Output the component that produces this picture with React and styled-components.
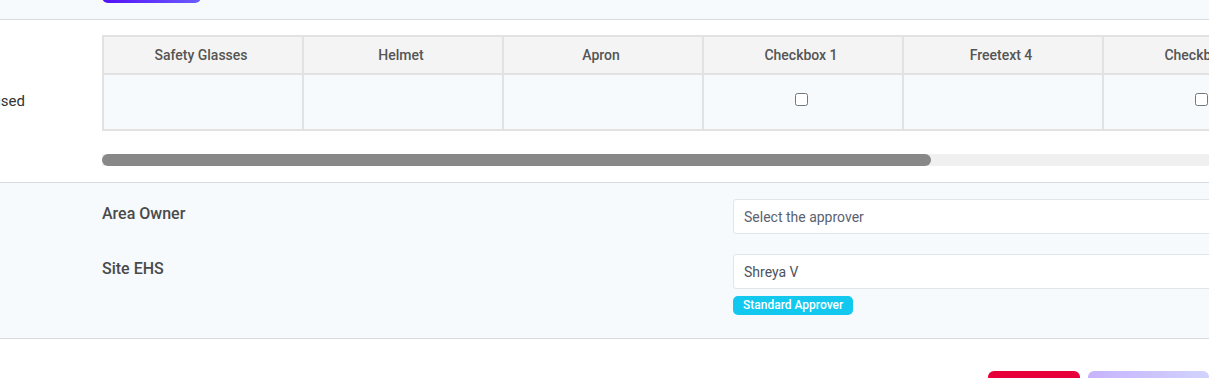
import React from "react";
import styled, { createGlobalStyle } from "styled-components";

const GlobalStyle = createGlobalStyle`
  html, body {
    margin: 0;
    padding: 0;
    overflow: hidden;
    background: #fff;
  }
  body {
    font-family: Roboto, "Liberation Sans", sans-serif;
    color: #444;
  }
  * {
    box-sizing: border-box;
  }
`;

const columns = [
  { title: "Safety Glasses", type: "text" },
  { title: "Helmet", type: "text" },
  { title: "Apron", type: "text" },
  { title: "Checkbox 1", type: "check" },
  { title: "Freetext 4", type: "text" },
  { title: "Checkbox 2", type: "check" },
  { title: "Freetext 5", type: "text" },
];

const approvers = [
  { role: "Area Owner", value: "", placeholder: "Select the approver" },
  { role: "Site EHS", value: "Shreya V", badge: "Standard Approver" },
];

// visible part of the table vs. its full width
const visibleRatio = 1107 / 1478;

const App = () => {
  return (
    <Page>
      <GlobalStyle />
      <TopBar>
        <PrimaryButton />
      </TopBar>

      <PpeSection>
        <SideLabel>Items to be used</SideLabel>
        <TableWrap>
          <ScrollArea>
            <Table>
              <thead>
                <tr>
                  {columns.map((c) => (
                    <HeadCell key={c.title}>{c.title}</HeadCell>
                  ))}
                </tr>
              </thead>
              <tbody>
                <tr>
                  {columns.map((c) => (
                    <BodyCell key={c.title}>
                      {c.type === "check" && <Check type="checkbox" />}
                    </BodyCell>
                  ))}
                </tr>
              </tbody>
            </Table>
          </ScrollArea>
          <ScrollTrack>
            <ScrollThumb style={{ width: `${visibleRatio * 100}%` }} />
          </ScrollTrack>
        </TableWrap>
      </PpeSection>

      <ApproverSection>
        {approvers.map((a) => (
          <ApproverRow key={a.role}>
            <RoleLabel>{a.role}</RoleLabel>
            <FieldCol>
              <SelectBox $empty={!a.value}>{a.value || a.placeholder}</SelectBox>
              {a.badge && <Badge>{a.badge}</Badge>}
            </FieldCol>
          </ApproverRow>
        ))}
      </ApproverSection>

      <Footer>
        <ActionButton $variant="danger" />
        <ActionButton $variant="submit" />
      </Footer>
    </Page>
  );
};

export default App;

const Page = styled.div`
  width: 100%;
  min-height: 378px;
`;

const TopBar = styled.div`
  height: 20px;
  display: flex;
  align-items: flex-end;
  padding: 0 0 16px 102px;
  background-color: #f6fafd;
  border-bottom: 1px solid #d9dcdf;
`;

const PrimaryButton = styled.div`
  flex: none;
  width: 99px;
  height: 36px;
  border-radius: 6px;
  background: linear-gradient(90deg, #5310f4 0%, #6b5cff 100%);
`;

const PpeSection = styled.div`
  display: flex;
  padding: 15px 0 16px;
  background: #fff;
  border-bottom: 1px solid #d9dcdf;
`;

const SideLabel = styled.div`
  flex: none;
  width: 102px;
  display: flex;
  justify-content: flex-end;
  align-items: center;
  padding-right: 77px;
  white-space: nowrap;
  font-size: 15px;
  color: #333;
  overflow: hidden;
`;

const TableWrap = styled.div`
  flex: 1;
  min-width: 0;
  display: flex;
  flex-direction: column;
  gap: 23px;
`;

const ScrollArea = styled.div`
  overflow: hidden;
`;

const ScrollTrack = styled.div`
  height: 12px;
  background: #f0f0f0;
`;

const ScrollThumb = styled.div`
  height: 100%;
  background: #888;
  border-radius: 6px;
`;

const Table = styled.table`
  width: 1400px;
  border-collapse: separate;
  border-spacing: 0;
  table-layout: fixed;
  border-top: 2px solid #e2e2e2;
  border-left: 2px solid #e2e2e2;
`;

const HeadCell = styled.th`
  width: 200px;
  height: 38px;
  background: #f4f4f4;
  border-right: 2px solid #e2e2e2;
  border-bottom: 2px solid #e2e2e2;
  font-size: 14px;
  font-weight: 500;
  color: #555;
  text-align: center;
  padding: 0 4px 0 0;
`;

const BodyCell = styled.td`
  height: 56px;
  background: #f6fafd;
  border-right: 2px solid #e2e2e2;
  border-bottom: 2px solid #e2e2e2;
  text-align: center;
  vertical-align: middle;
  padding: 0 3px 8px 0;
`;

const Check = styled.input`
  width: 13px;
  height: 13px;
  margin: 0;
  vertical-align: middle;
`;

const ApproverSection = styled.div`
  display: flex;
  flex-direction: column;
  gap: 20px;
  padding: 16px 0 23px 102px;
  background: #f6fafd;
  border-bottom: 1px solid #d9dcdf;
`;

const ApproverRow = styled.div`
  display: grid;
  grid-template-columns: 631px 520px;
  align-items: start;
`;

const RoleLabel = styled.div`
  padding-top: 3px;
  font-size: 16px;
  line-height: 24px;
  font-weight: 500;
  color: #4a4a4a;
`;

const FieldCol = styled.div`
  display: flex;
  flex-direction: column;
  align-items: flex-start;
  gap: 7px;
`;

const SelectBox = styled.div`
  width: 100%;
  height: 35px;
  display: flex;
  align-items: center;
  padding: 0 10px;
  background: #fff;
  border: 1px solid #e1e4e8;
  border-radius: 3px;
  font-size: 14px;
  color: ${(p) => (p.$empty ? "#5a6270" : "#4d5360")};
`;

const Badge = styled.span`
  display: inline-block;
  height: 19px;
  line-height: 19px;
  padding: 0 10px;
  border-radius: 5px;
  background: #12c8ef;
  color: #fff;
  font-size: 12px;
  font-weight: 500;
`;

const Footer = styled.div`
  display: flex;
  justify-content: flex-end;
  gap: 8px;
  padding-top: 32px;
  background: #fff;
`;

const ActionButton = styled.div`
  flex: none;
  height: 36px;
  border-radius: 6px;
  width: ${(p) => (p.$variant === "danger" ? "92px" : "121px")};
  background: ${(p) =>
    p.$variant === "danger"
      ? "#e8003a"
      : "linear-gradient(90deg, #c7b3fd 0%, #d1d3fd 100%)"};
`;
